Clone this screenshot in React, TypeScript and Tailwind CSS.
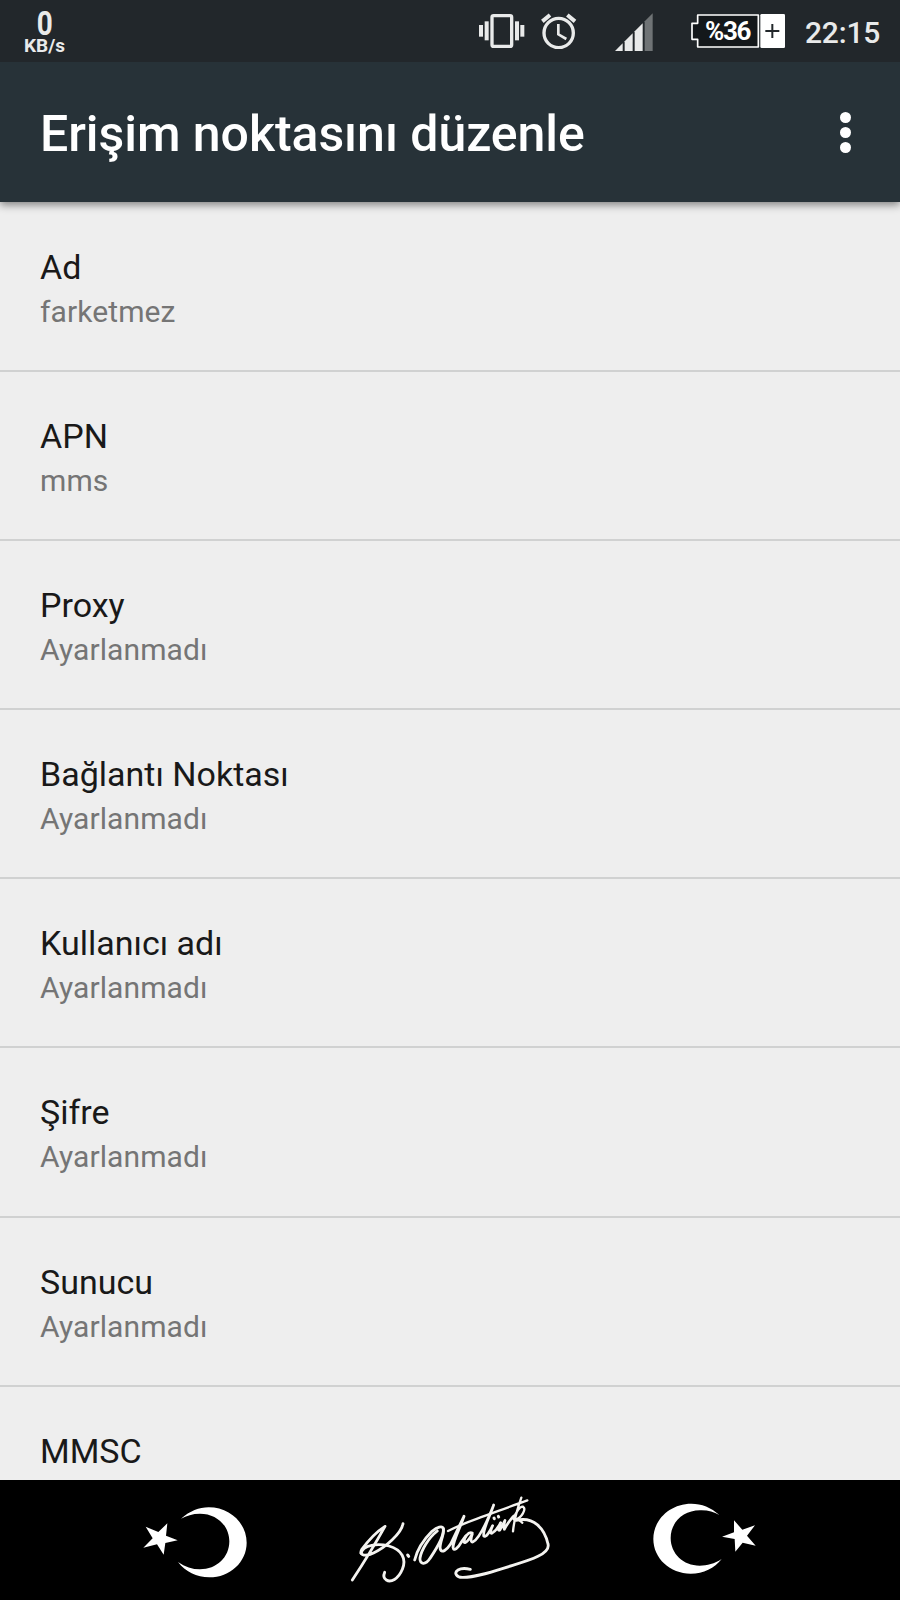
import React from 'react';

interface Setting {
  title: string;
  summary: string;
}

const settings: Setting[] = [
  { title: 'Ad', summary: 'farketmez' },
  { title: 'APN', summary: 'mms' },
  { title: 'Proxy', summary: 'Ayarlanmadı' },
  { title: 'Bağlantı Noktası', summary: 'Ayarlanmadı' },
  { title: 'Kullanıcı adı', summary: 'Ayarlanmadı' },
  { title: 'Şifre', summary: 'Ayarlanmadı' },
  { title: 'Sunucu', summary: 'Ayarlanmadı' },
  { title: 'MMSC', summary: '' },
];

const VibrateIcon = () => (
  <svg className="w-[48px] h-[40px] shrink-0" viewBox="0 0 144 120" fill="#e9eaea">
    <rect x="39" y="20" width="59" height="92" rx="5" fill="none" stroke="#e9eaea" strokeWidth="10" />
    <rect x="0" y="48" width="12" height="35" />
    <rect x="17" y="37" width="12" height="57" />
    <rect x="108" y="37" width="12" height="57" />
    <rect x="124" y="48" width="12" height="35" />
  </svg>
);

const AlarmIcon = () => (
  <svg className="w-[36px] h-[40px] shrink-0" viewBox="0 0 108 120" fill="none" stroke="#e9eaea">
    <circle cx="53" cy="72" r="44" strokeWidth="10" />
    <path d="M52 45v31l24 14" strokeWidth="8" />
    <path d="M4 37L27 18M79 18L102 37" strokeWidth="12" />
  </svg>
);

const SignalIcon = () => (
  <svg className="w-[38px] h-[42px] shrink-0" viewBox="0 0 114 126" fill="#e9eaea">
    <path d="M0 126L23 103V126Z" />
    <path d="M29 97L53 73V126H29Z" />
    <path d="M59 67L83 43V126H59Z" />
    <path d="M89 37L113 13V126H89Z" fill="#6f7375" />
  </svg>
);

const Battery = () => (
  <div className="relative w-[94px] h-[34px] shrink-0">
    <svg className="block w-full h-full" viewBox="0 0 282 102">
      <path d="M20 3H202V99H20V76H3V28H20Z" fill="#14181b" stroke="#fff" strokeWidth="5" strokeLinejoin="round" />
      <rect x="208" y="0" width="74" height="102" rx="4" fill="#fff" />
      <path d="M244 30V72M223 51H265" stroke="#22272b" strokeWidth="6" />
    </svg>
    <span className="absolute left-[14px] top-[2px] text-[26px] leading-[30px] font-bold tracking-[-1.3px] text-white">%36</span>
  </div>
);

const StatusBar = () => (
  <div className="h-[62px] bg-[#22272b] flex items-start shrink-0 text-[#e9eaea]">
    <div className="ml-[23px] w-[43px] flex flex-col items-center">
      <span className="mt-[8px] h-[29px] text-[34px] leading-[30px] font-bold scale-x-[0.82]">0</span>
      <span className="text-[19px] leading-[18px] font-bold">KB/s</span>
    </div>
    <div className="ml-[413px] mt-[9px] flex">
      <VibrateIcon />
      <div className="ml-[14px]"><AlarmIcon /></div>
      <div className="ml-[38px]"><SignalIcon /></div>
    </div>
    <div className="ml-[38px] mt-[14px]"><Battery /></div>
    <span className="ml-[20px] mt-[15px] text-[30px] leading-[36px] font-medium tracking-[-0.2px]">22:15</span>
  </div>
);

const SettingRow: React.FC<Setting> = ({ title, summary }) => (
  <div className="h-[169.2px] shrink-0 border-b-2 border-[#d0d1d1] px-10 pt-[42px]">
    <div className="text-[34px] leading-[44px] text-[#191919]">{title}</div>
    <div className="text-[30px] leading-[46px] tracking-[0.1px] text-[#757575]">{summary}</div>
  </div>
);

const SignatureIcon = () => (
  <svg className="w-[240px] h-[120px] shrink-0" viewBox="0 30 720 360" fill="none" stroke="#f4f3f0" strokeWidth="8.5" strokeLinecap="round" strokeLinejoin="round">
    <path d="M67 330C92 292 131 230 165 169C143 183 113 214 95 239C85 258 110 260 132 248C165 233 214 191 219 161" />
    <path d="M93 250C99 223 145 220 177 228C216 239 230 268 217 298C205 328 182 338 169 330C161 325 160 316 164 307" />
    <path d="M233 255L236 259" strokeWidth="9" />
    <path d="M254 270C262 238 284 206 306 184C322 171 337 166 340 176C343 200 317 240 300 265C287 286 268 284 270 264C274 240 296 203 322 183" />
    <path d="M340 176C345 190 326 222 331 238C336 250 350 240 362 222L402 139C389 176 369 214 369 232C371 246 385 233 393 218L407 198" />
    <path d="M427 189C414 184 402 204 402 216C406 223 418 208 427 192C421 208 422 220 430 215C448 205 474 148 491 105C478 143 458 179 461 198C467 205 480 184 488 167C480 183 480 193 487 189C498 182 507 168 512 158C504 175 503 184 510 180L525 151C522 162 521 172 523 178C532 160 540 151 551 138" strokeWidth="8" />
    <path d="M354 183C388 166 414 156 442 146C489 129 536 111 592 91M574 83C564 111 552 152 549 184M551 148C557 126 570 108 579 110C590 117 575 144 556 149C565 144 568 152 577 158" strokeWidth="7" />
    <path d="M492 144L493 146M505 139L506 141" strokeWidth="9" />
    <path d="M558 151C612 138 644 177 654 222C662 251 601 270 548 286C493 303 437 323 397 322C379 322 371 308 384 300C392 295 409 295 421 298" />
  </svg>
);

const Footer = () => (
  <div className="h-[120px] shrink-0 bg-black flex">
    <svg className="ml-[120px] w-[150px] h-[120px]" viewBox="0 30 450 360" fill="#fff">
      <path d="M183 146C210 123 237 112 266 112C330 112 380 160 380 218C380 276 330 322 268 322C230 322 196 305 174 276C195 291 217 298 240 298C290 298 328 262 328 214C328 167 290 131 240 131C217 131 200 137 183 146Z" />
      <path d="M77 170L115 186L142 160L138 197L173 211L136 219L131 254L111 223L70 233L98 205Z" />
    </svg>
    <div className="ml-[60px]"><SignatureIcon /></div>
    <svg className="ml-[60px] w-[150px] h-[120px]" viewBox="0 30 450 360" fill="#fff">
      <path d="M268 135C243 112 215 101 184 101C120 101 70 149 70 207C70 265 120 311 182 311C221 311 253 295 275 267C253 281 232 287 209 287C160 287 122 251 122 204C122 157 160 121 210 121C233 120 251 126 268 135Z" />
      <path d="M276 200L312 187V151L337 179L375 166L351 197L377 227L338 218L316 245L314 207Z" />
    </svg>
  </div>
);

const App: React.FC = () => {
  return (
    <div className="w-[900px] h-[1600px] flex flex-col overflow-hidden bg-[#eeeeee] font-[Roboto,sans-serif]">
      <div className="relative z-20 shrink-0"><StatusBar /></div>
      <header className="relative z-10 h-[140px] shrink-0 bg-[#273238] flex items-center justify-between pl-10 pr-[49.5px] shadow-[0_3px_8px_rgba(0,0,0,0.45)]">
        <h1 className="text-[50px] leading-[60px] font-medium tracking-[-0.05px] text-white pt-[4px]">Erişim noktasını düzenle</h1>
        <div className="flex flex-col gap-1">
          <span className="w-[11px] h-[11px] rounded-full bg-white" />
          <span className="w-[11px] h-[11px] rounded-full bg-white" />
          <span className="w-[11px] h-[11px] rounded-full bg-white" />
        </div>
      </header>
      <main className="h-[1278px] shrink-0 flex flex-col overflow-hidden pt-[0.5px]">
        {settings.map((item) => (
          <SettingRow key={item.title} title={item.title} summary={item.summary} />
        ))}
      </main>
      <Footer />
    </div>
  );
};

export default App;
